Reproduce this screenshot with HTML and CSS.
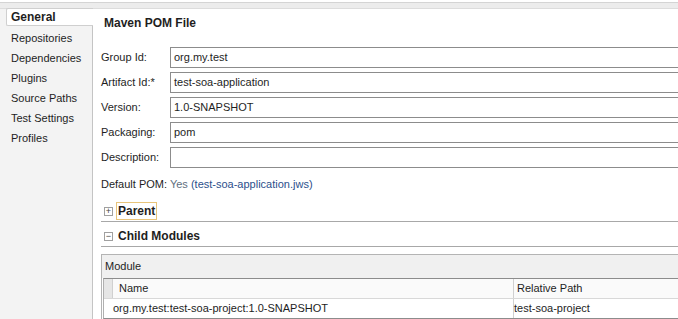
FILE: index.html
```html
<!DOCTYPE html>
<html lang="en">
<head>
  <meta charset="UTF-8" />
  <title>Maven POM File</title>
  <link rel="stylesheet" href="styles.css">
</head>
<body>
  <div class="top-strip"></div>
  <div class="layout">
    <ul class="nav">
      <li class="nav-item selected">General</li>
      <li class="nav-item">Repositories</li>
      <li class="nav-item">Dependencies</li>
      <li class="nav-item">Plugins</li>
      <li class="nav-item">Source Paths</li>
      <li class="nav-item">Test Settings</li>
      <li class="nav-item">Profiles</li>
    </ul>

    <div class="main">
      <div class="page-title">Maven POM File</div>

      <div class="form">
        <label class="form-label">Group Id:</label>
        <div class="field">org.my.test</div>
        <label class="form-label">Artifact Id:*</label>
        <div class="field">test-soa-application</div>
        <label class="form-label">Version:</label>
        <div class="field">1.0-SNAPSHOT</div>
        <label class="form-label">Packaging:</label>
        <div class="field">pom</div>
        <label class="form-label">Description:</label>
        <div class="field"></div>
      </div>

      <div class="default-pom">
        Default POM: <span class="muted">Yes</span> <span class="link">(test-soa-application.jws)</span>
      </div>

      <div class="section">
        <span class="toggle">+</span>
        <span class="section-title focused">Parent</span>
      </div>
      <div class="section">
        <span class="toggle">&minus;</span>
        <span class="section-title">Child Modules</span>
      </div>

      <div class="module-box">
        <div class="module-head">Module</div>
        <div class="grid">
          <div class="grid-row grid-header">
            <div class="gutter"></div>
            <div class="cell cell-name">Name</div>
            <div class="cell cell-path">Relative Path</div>
          </div>
          <div class="grid-row">
            <div class="cell cell-name first">org.my.test:test-soa-project:1.0-SNAPSHOT</div>
            <div class="cell cell-path">test-soa-project</div>
          </div>
        </div>
      </div>
    </div>
  </div>
</body>
</html>
```

FILE: styles.css
```css
body {
  margin: 0;
  font-family: 'Liberation Sans', Arial, sans-serif;
  font-size: 11px;
  color: #1e1e1e;
  background: #fff;
  overflow: hidden;
  width: 678px;
  height: 319px;
}

.top-strip {
  height: 5px;
  margin-top: 2px;
  background: #ececec;
  border-top: 1px solid #d4d4d4;
  border-bottom: 1px solid #dcdcdc;
}

.layout {
  display: flex;
  height: 310px;
}

/* left navigation */
.nav {
  list-style: none;
  margin: 0;
  padding: 0 0 0 6px;
  width: 86px;
  background: #f3f3f3;
  border-right: 1px solid #c4c4c4;
  flex-shrink: 0;
}

.nav-item {
  height: 20px;
  line-height: 20px;
  padding-left: 5px;
  white-space: nowrap;
}

.nav-item.selected {
  height: 16px;
  line-height: 16px;
  margin-top: -1px;
  margin-bottom: 2px;
  padding-left: 4px;
  margin-right: -1px;
  background: #fff;
  font-weight: 700;
  font-size: 12px;
  border: 1px solid #cfcfcf;
  border-right: none;
  border-radius: 2px 0 0 2px;
}

/* main panel */
.main {
  flex-shrink: 0;
  width: 660px;
  padding-left: 8px;
}

.page-title {
  font-weight: 700;
  font-size: 12px;
  padding-left: 3px;
  line-height: 16px;
  margin-top: 6px;
}

.form {
  display: grid;
  grid-template-columns: 69px 1fr;
  row-gap: 4px;
  margin-top: 16px;
}

.form-label {
  line-height: 21px;
  white-space: nowrap;
}

.field {
  height: 19px;
  line-height: 19px;
  border: 1px solid #8c8c8c;
  padding-left: 3px;
  background: #fff;
}

.default-pom {
  margin-top: 6px;
  line-height: 20px;
}

.muted {
  color: #5f6f80;
}

.link {
  color: #2c4f8c;
}

.section {
  display: flex;
  align-items: center;
  height: 20px;
  margin-top: 7px;
  border-bottom: 1px solid #a8a8a8;
  padding-left: 3px;
  gap: 3px;
}

.section + .section {
  margin-top: 4px;
}

.toggle {
  width: 7px;
  height: 7px;
  border: 1px solid #a0a0a0;
  font-size: 9px;
  line-height: 7px;
  text-align: center;
  color: #444;
  background: #fff;
}

.section-title {
  font-weight: 700;
  font-size: 12px;
  padding: 1px 1px;
  border: 1px solid transparent;
}

.section-title.focused {
  border-color: #e8c47a;
}

/* modules table */
.module-box {
  margin-top: 7px;
  border: 1px solid #b4b4b4;
  border-right: none;
}

.module-head {
  height: 23px;
  line-height: 23px;
  padding-left: 3px;
  background: #f0f0f0;
}

.grid {
  margin-left: 1px;
  border-top: 1px solid #8c8c8c;
  border-left: 1px solid #b0b0b0;
  border-bottom: 1px solid #8c8c8c;
}

.grid-row {
  display: flex;
  height: 19px;
  line-height: 19px;
}

.grid-header {
  background: #fafafa;
  border-bottom: 1px solid #d8d8d8;
}

.gutter {
  width: 8px;
  background: #e6e6e6;
  border-right: 1px solid #d0d0d0;
}

.cell {
  white-space: nowrap;
}

.cell-name {
  width: 394px;
  padding-left: 6px;
}

.cell-name.first {
  width: 400px;
  padding-left: 9px;
}

.cell-path {
  flex: 1;
  border-left: 1px solid #d0d0d0;
  padding-left: 3px;
}

.grid-row:not(.grid-header) .cell-path {
  padding-left: 0;
}
```
